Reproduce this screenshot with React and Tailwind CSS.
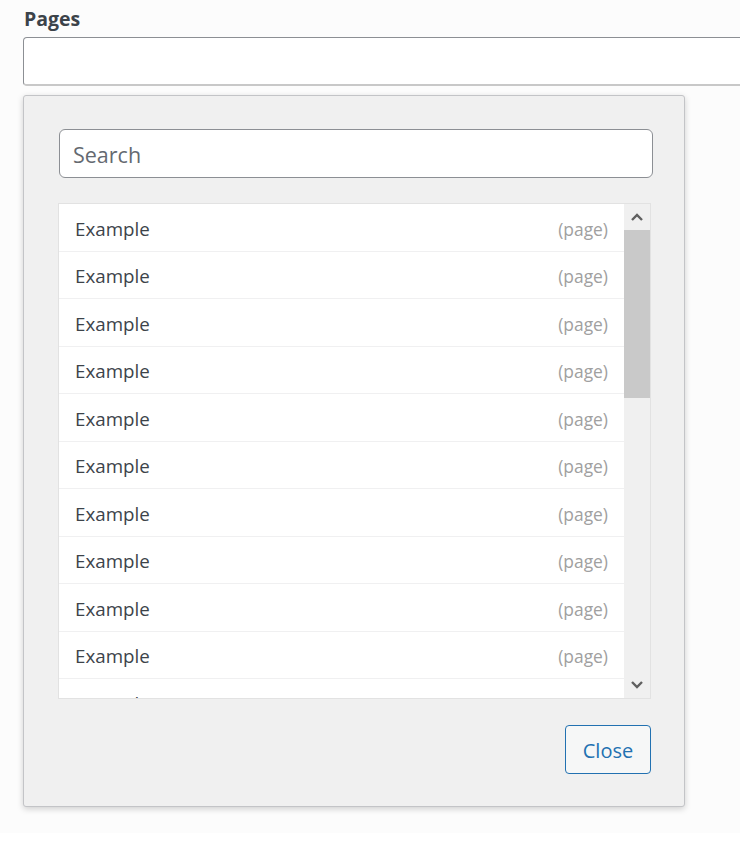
import React from "react";

const rows = Array.from({ length: 11 });

export default function App() {
  return (
    <div className="w-[748px] h-[843px] bg-white" style={{ fontFamily: '"Open Sans", "Noto Sans", sans-serif' }}>
      <div className="w-[740px] h-[833px] bg-[#fcfcfc] overflow-hidden pl-[23px] pt-[4px]">
        <div className="text-[19.5px] leading-[28px] font-bold text-[#3c434a] pl-[1px] pt-[1px] h-[28px]">Pages</div>
        <div className="mt-[5px] h-[49px] w-[760px] bg-white border border-[#8c8f94] border-b-2 border-b-[#c8c8c8] rounded-[4px]" />
        <div className="mt-[9px] w-[662px] h-[712px] bg-[#f0f0f0] border border-[#c3c4c7] rounded-[3px] shadow-[0_2px_6px_rgba(0,0,0,0.18)] pl-[34px] pt-[33px] flex flex-col">
          <div className="ml-[1px] w-[594px] h-[49px] bg-white border border-[#8c8f94] rounded-[6px] flex items-center px-[13px] pt-[3px] text-[21.5px] text-[#646970]">
            Search
          </div>
          <div className="mt-[25px] w-[593px] h-[496px] bg-white border border-[#e2e2e2] flex">
            <div className="flex-1 overflow-hidden">
              {rows.map((_, i) => (
                <div
                  key={i}
                  className="h-[47.5px] border-b border-[#f0f0f1] flex items-center justify-between pl-[16px] pr-[16px] pt-[3px]"
                >
                  <span className="text-[18.75px] text-[#3c434a]">Example</span>
                  <span className="text-[17.4px] text-[#a0a0a0]">(page)</span>
                </div>
              ))}
            </div>
            <div className="w-[26px] h-full bg-[#f0f0f0] flex flex-col">
              <div className="h-[26px] flex items-center justify-center">
                <svg width="12" height="8" viewBox="0 0 12 8">
                  <path d="M1 7 L6 2 L11 7" fill="none" stroke="#606060" strokeWidth="2.4" />
                </svg>
              </div>
              <div className="h-[168px] bg-[#c9c9c9]" />
              <div className="flex-1" />
              <div className="h-[26px] flex items-center justify-center">
                <svg width="12" height="8" viewBox="0 0 12 8">
                  <path d="M1 1 L6 6 L11 1" fill="none" stroke="#606060" strokeWidth="2.4" />
                </svg>
              </div>
            </div>
          </div>
          <div className="mt-[26px] w-[593px] flex justify-end">
            <button className="w-[86px] h-[49px] border border-[#2271b1] rounded-[4px] bg-[#f6f7f7] text-[#2271b1] text-[20px] pt-[2px] flex items-center justify-center">
              Close
            </button>
          </div>
        </div>
      </div>
    </div>
  );
}
